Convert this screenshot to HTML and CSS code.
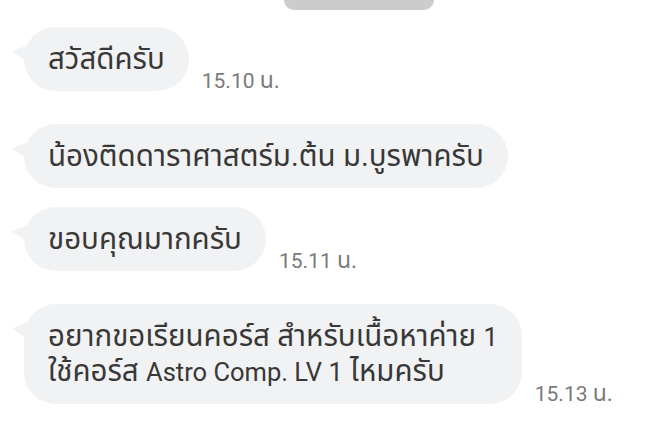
FILE: index.html
```html
<!DOCTYPE html>
<html lang="th">
<head>
<meta charset="utf-8">
<link rel="stylesheet" href="styles.css">
</head>
<body>
<div class="top-pill"></div>
<div class="chat">
  <div class="row gap-big">
    <div class="bubble">สวัสดีครับ</div>
    <span class="time">15.10 <span class="th">น.</span></span>
  </div>
  <div class="row gap-small">
    <div class="bubble">น้องติดดาราศาสตร์ม.ต้น ม.บูรพาครับ</div>
  </div>
  <div class="row gap-big">
    <div class="bubble">ขอบคุณมากครับ</div>
    <span class="time">15.11 <span class="th">น.</span></span>
  </div>
  <div class="row">
    <div class="bubble">อยากขอเรียนคอร์ส สำหรับเนื้อหาค่าย <span class="lat">1</span><br>ใช้คอร์ส <span class="lat">Astro Comp. LV 1</span> ไหมครับ</div>
    <span class="time">15.13 <span class="th">น.</span></span>
  </div>
</div>
</body>
</html>
```

FILE: styles.css
```css
html, body {
  margin: 0;
  padding: 0;
  background: #ffffff;
}
body {
  width: 656px;
  height: 430px;
  overflow: hidden;
  font-family: Roboto, "Noto Sans Thai", "Noto Sans", sans-serif;
}
.top-pill {
  width: 150px;
  height: 10px;
  margin-left: 284px;
  background: #cccccc;
  border-radius: 0 0 14px 14px;
}
.chat {
  display: flex;
  flex-direction: column;
  padding: 17px 0 0 24px;
}
.row {
  display: flex;
  align-items: flex-end;
  gap: 13px;
}
.gap-big { margin-bottom: 33px; }
.gap-small { margin-bottom: 19px; }
.bubble {
  position: relative;
  background: #f1f2f4;
  color: #383838;
  font-size: 29.5px;
  line-height: 34px;
  padding: 15px 24px;
  border-radius: 32px;
  white-space: nowrap;
}
.bubble .lat {
  font-size: 25.5px;
}
.bubble::before {
  content: "";
  position: absolute;
  left: -12px;
  top: 18px;
  width: 16px;
  height: 17px;
  background: #f1f2f4;
  clip-path: polygon(0 38%, 100% 0, 100% 100%);
}
.time {
  font-size: 21px;
  line-height: 24px;
  color: #7a7a7a;
  margin-bottom: -2px;
}
.time .th {
  font-size: 23px;
}
```
